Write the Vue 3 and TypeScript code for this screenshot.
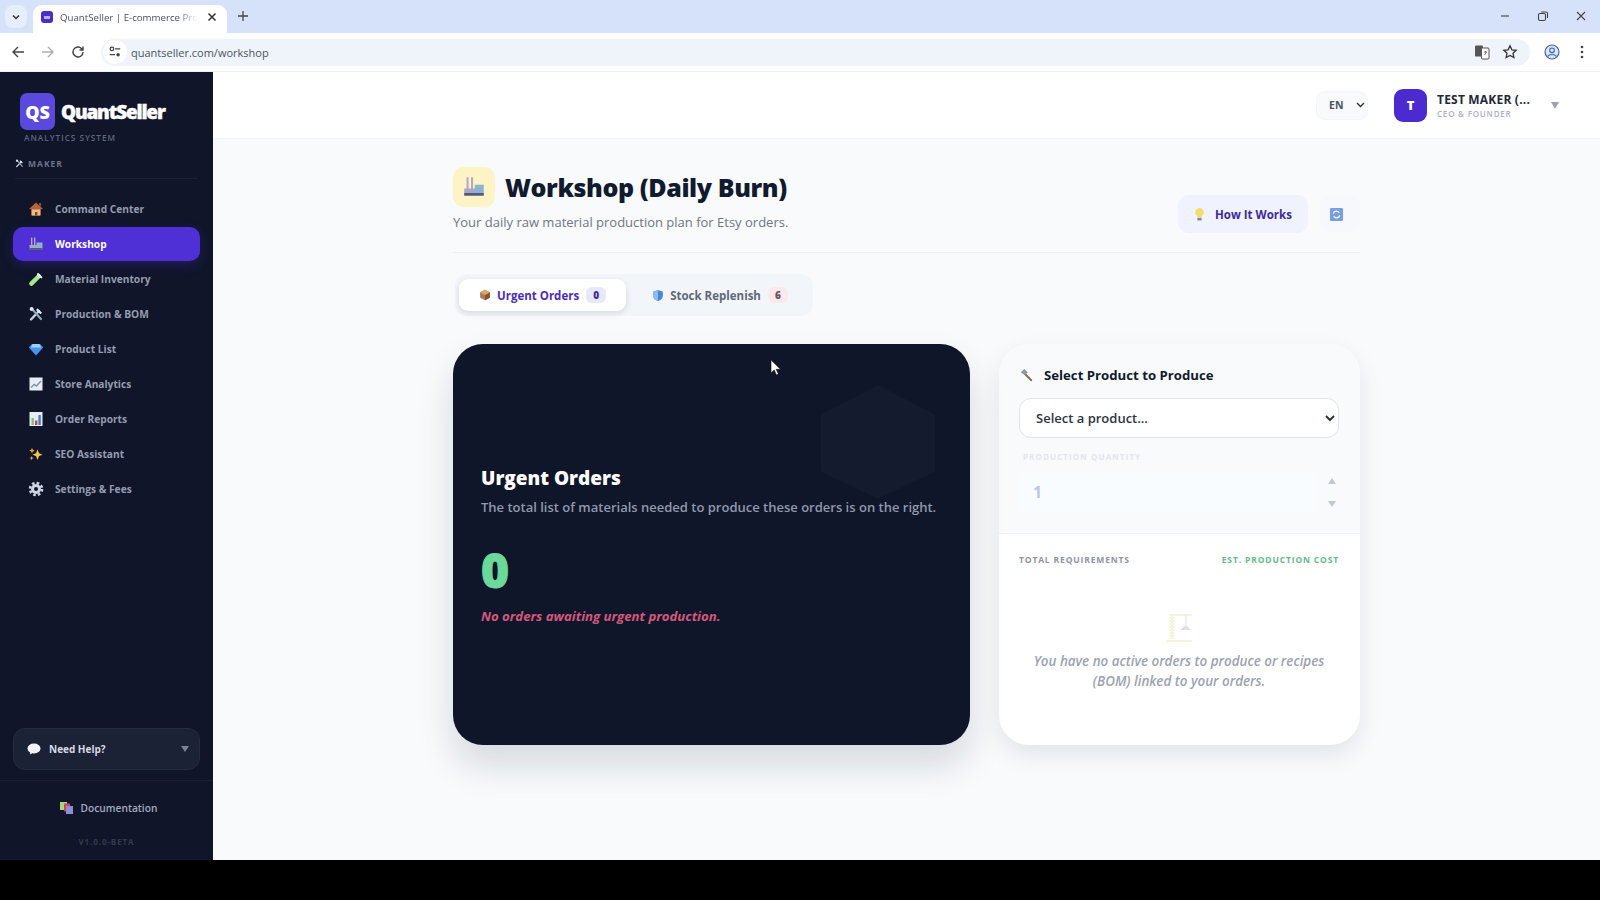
<script setup lang="ts">
import { ref } from 'vue'

// нарисованные вручную иконки вместо эмодзи
const icons: Record<string, string> = {
  house: '<path d="M8 1.5 1 8h2v6.5h10V8h2z" fill="#b9603f"/><path d="M4 8.5h8v6H4z" fill="#e9bd84"/><path d="M7 11h2.4v3.5H7z" fill="#7a4a2c"/><path d="M11 2h2v4l-2-1.8z" fill="#8c4a30"/>',
  factory: '<path d="M3 1.5h1.4v8H3zM6 1.5h1.4v8H6z" fill="#b9a6c9"/><path d="M1.5 9H9v4.5H1.5z" fill="#a7a9c4"/><path d="M8.5 6.5h6v7h-6z" fill="#8fb2d0"/><path d="M1.5 12h13v1.8h-13z" fill="#55587a"/>',
  tube: '<path d="m3.4 12.6 7.4-7.4" stroke="#a8e78b" stroke-width="4.4" stroke-linecap="round"/><path d="m10 3 3.4 3.4" stroke="#f1f5f9" stroke-width="2" stroke-linecap="round"/><path d="m10.2 5.8 1.2-1.2" stroke="#dff5d3" stroke-width="3.4"/>',
  tools: '<path d="m3 13.5 8-8.5" stroke="#cbd5e1" stroke-width="2.4" stroke-linecap="round"/><path d="M9.5 2.2 14 6.8l-1.6 1.4L8 4z" fill="#e2e8f0"/><path d="m4 3 9 10" stroke="#94a3b8" stroke-width="2.2" stroke-linecap="round"/><circle cx="3.6" cy="3" r="2" fill="#e2e8f0"/>',
  gem: '<path d="M4 3h8l3.2 3.6L8 14.5.8 6.6z" fill="#4a94ea"/><path d="M4.6 3h6.8L13 6.6H3z" fill="#9fd0fb"/>',
  chart: '<rect x="1.5" y="1.5" width="13" height="13" fill="#e8ecf4"/><path d="m3 11.5 3.2-3 2.2 1.6L13 5" stroke="#8290b4" stroke-width="1.5" fill="none"/>',
  bars: '<rect x="1.5" y="1" width="13" height="14" fill="#e8ecf4"/><path d="M3.5 7h2.4v7H3.5z" fill="#7cc37a"/><path d="M7 9.5h2.4V14H7z" fill="#c9415f"/><path d="M10.4 4h2.4v10h-2.4z" fill="#4a78c8"/>',
  spark: '<path d="M9.5 3.5 11 7.3l3.6 1.4L11 10l-1.5 4L8 10 4.4 8.7 8 7.3z" fill="#f6c945"/><path d="m4 1.8.8 2 2 .8-2 .8-.8 2-.8-2-2-.8 2-.8z" fill="#f3a33a"/><path d="m3.6 10 .6 1.5 1.5.6-1.5.6-.6 1.5-.6-1.5-1.5-.6 1.5-.6z" fill="#f3a33a"/>',
  gear: '<circle cx="8" cy="8" r="5" fill="#cfd6e2"/><circle cx="8" cy="8" r="6" fill="none" stroke="#cfd6e2" stroke-width="2.6" stroke-dasharray="2.6 2.1"/><circle cx="8" cy="8" r="2" fill="#10162a"/>',
  tune: '<circle cx="4.5" cy="4.5" r="2" fill="none" stroke="#444" stroke-width="1.4"/><path d="M8 4.5h6M2 11h6" stroke="#444" stroke-width="1.4"/><circle cx="11.5" cy="11" r="2" fill="#444"/>',
}

const navItems = [
  { label: 'Command Center', icon: 'house' },
  { label: 'Workshop', icon: 'factory', active: true },
  { label: 'Material Inventory', icon: 'tube' },
  { label: 'Production & BOM', icon: 'tools' },
  { label: 'Product List', icon: 'gem' },
  { label: 'Store Analytics', icon: 'chart' },
  { label: 'Order Reports', icon: 'bars' },
  { label: 'SEO Assistant', icon: 'spark' },
  { label: 'Settings & Fees', icon: 'gear' },
]

const activeTab = ref('urgent')
const product = ref('')
const quantity = ref(1)
</script>

<template>
  <div class="screen">
    <!-- полоса браузера -->
    <div class="tabstrip">
      <div class="tab-menu">
        <svg width="10" height="10" viewBox="0 0 10 10"><path d="m2 3.5 3 3 3-3" stroke="#333" stroke-width="1.5" fill="none"/></svg>
      </div>
      <div class="tab">
        <span class="favicon"><i></i></span>
        <span class="tab-title">QuantSeller | E-commerce Prof</span>
        <svg class="tab-close" width="10" height="10" viewBox="0 0 10 10"><path d="m1.5 1.5 7 7m0-7-7 7" stroke="#333" stroke-width="1.5"/></svg>
      </div>
      <svg class="tab-plus" width="12" height="12" viewBox="0 0 12 12"><path d="M6 1v10M1 6h10" stroke="#444" stroke-width="1.3"/></svg>
      <div class="win-controls">
        <svg width="12" height="12" viewBox="0 0 12 12"><path d="M2 6h8" stroke="#444" stroke-width="1.1"/></svg>
        <svg width="12" height="12" viewBox="0 0 12 12"><rect x="1.5" y="3.5" width="7" height="7" rx="1.5" fill="none" stroke="#444" stroke-width="1.1"/><path d="M4 2h5a1.5 1.5 0 0 1 1.5 1.5V8" fill="none" stroke="#444" stroke-width="1.1"/></svg>
        <svg width="12" height="12" viewBox="0 0 12 12"><path d="m2 2 8 8m0-8-8 8" stroke="#444" stroke-width="1.1"/></svg>
      </div>
    </div>

    <div class="toolbar">
      <svg width="14" height="14" viewBox="0 0 14 14"><path d="M13 7H2m5-5L2 7l5 5" fill="none" stroke="#444" stroke-width="1.4"/></svg>
      <svg width="14" height="14" viewBox="0 0 14 14"><path d="M1 7h11M7 2l5 5-5 5" fill="none" stroke="#a9adb3" stroke-width="1.4"/></svg>
      <svg width="14" height="14" viewBox="0 0 14 14"><path d="M12 7a5 5 0 1 1-1.500-3.600L12 5M12 1.500V5H8.500" fill="none" stroke="#444" stroke-width="1.4"/></svg>
      <div class="omnibox">
        <span class="omni-chip"><svg width="14" height="14" viewBox="0 0 16 16" v-html="icons.tune"></svg></span>
        <span class="url">quantseller.com/workshop</span>
        <svg class="omni-translate" width="16" height="16" viewBox="0 0 16 16"><rect x="1" y="1.5" width="8" height="11" rx="1" fill="#555"/><rect x="7.5" y="4" width="7.5" height="11" rx="1" fill="#fff" stroke="#555"/><path d="M10 8h3m-1.500-1v1m-1 3 2-3" stroke="#555" stroke-width=".8" fill="none"/></svg>
        <svg width="16" height="16" viewBox="0 0 16 16"><path d="m8 1.8 1.900 4 4.300.5-3.200 3 .9 4.300L8 11.400l-3.900 2.200.9-4.300-3.200-3 4.300-.5z" fill="none" stroke="#333" stroke-width="1.3"/></svg>
      </div>
      <svg width="16" height="16" viewBox="0 0 16 16"><circle cx="8" cy="8" r="7" fill="#dbe6fb" stroke="#3d63b0" stroke-width="1.2"/><circle cx="8" cy="6.3" r="2.3" fill="none" stroke="#3d63b0" stroke-width="1.1"/><path d="M3.600 12.500c1.600-2.600 7.200-2.600 8.800 0" fill="none" stroke="#3d63b0" stroke-width="1.1"/></svg>
      <svg class="kebab" width="4" height="14" viewBox="0 0 4 14"><circle cx="2" cy="2" r="1.3" fill="#444"/><circle cx="2" cy="7" r="1.3" fill="#444"/><circle cx="2" cy="12" r="1.3" fill="#444"/></svg>
    </div>

    <div class="app-body">
      <aside class="sidebar">
        <div class="brand">
          <span class="brand-mark">QS</span>
          <span class="brand-name">QuantSeller</span>
        </div>
        <div class="brand-sub">ANALYTICS SYSTEM</div>
        <div class="role">
          <svg width="9" height="9" viewBox="0 0 16 16" v-html="icons.tools"></svg>
          <span>MAKER</span>
        </div>

        <nav class="nav">
          <a v-for="item in navItems" :key="item.label" class="nav-item" :class="{ active: item.active }">
            <svg width="16" height="16" viewBox="0 0 16 16" v-html="icons[item.icon]"></svg>
            <span>{{ item.label }}</span>
          </a>
        </nav>

        <button class="help">
          <svg width="14" height="12" viewBox="0 0 14 12"><ellipse cx="7" cy="5.5" rx="6.5" ry="5" fill="#f1f5f9"/><path d="m3 9 .2 2.600L6 9.800z" fill="#f1f5f9"/></svg>
          <span>Need Help?</span>
          <i class="help-caret"></i>
        </button>

        <div class="side-foot">
          <a class="docs">
            <svg width="15" height="14" viewBox="0 0 15 14"><rect x="1" y="1" width="7" height="8" fill="#a3d977"/><rect x="5" y="2.5" width="6" height="8" fill="#c9485f"/><rect x="7" y="5" width="7" height="8" fill="#8a8fd8"/></svg>
            <span>Documentation</span>
          </a>
          <div class="version">V1.0.0-BETA</div>
        </div>
      </aside>

      <div class="main-col">
        <header class="topbar">
          <div class="lang">
            <span>EN</span>
            <svg width="9" height="6" viewBox="0 0 9 6"><path d="m1 1 3.500 3.500L8 1" fill="none" stroke="#333" stroke-width="1.4"/></svg>
          </div>
          <div class="avatar">T</div>
          <div class="user">
            <div class="user-name">TEST MAKER (...</div>
            <div class="user-role">CEO &amp; FOUNDER</div>
          </div>
          <i class="user-caret"></i>
        </header>

        <main class="page">
          <div class="page-head">
            <div>
              <div class="title-row">
                <span class="title-icon"><svg width="24" height="24" viewBox="0 0 16 16" v-html="icons.factory"></svg></span>
                <h1>Workshop (Daily Burn)</h1>
              </div>
              <p class="subtitle">Your daily raw material production plan for Etsy orders.</p>
            </div>
            <div class="head-actions">
              <button class="how-btn">
                <svg width="11" height="15" viewBox="0 0 12 16"><path d="M6 1a4.600 4.600 0 0 0-2.600 8.400V11h5.200V9.400A4.600 4.600 0 0 0 6 1z" fill="#f3dc6e"/><rect x="3.6" y="11.6" width="4.8" height="3" rx="1" fill="#8b8b8b"/></svg>
                <span>How It Works</span>
              </button>
              <button class="refresh-btn">
                <svg width="15" height="15" viewBox="0 0 16 16"><rect x="1" y="1" width="14" height="14" rx="1.5" fill="#7a9fdc"/><path d="M4.500 7a3.600 3.600 0 0 1 6.400-1M11.500 9a3.600 3.600 0 0 1-6.400 1" fill="none" stroke="#fff" stroke-width="1.3"/></svg>
              </button>
            </div>
          </div>

          <div class="tabs">
            <button class="tab-btn" :class="{ current: activeTab === 'urgent' }" @click="activeTab = 'urgent'">
              <svg width="12" height="12" viewBox="0 0 16 16"><path d="m8 1 6.500 3.400v7.200L8 15l-6.500-3.400V4.400z" fill="#b07a4c"/><path d="M8 8v7l6.500-3.400V4.400z" fill="#7f5534"/><path d="M1.500 4.400 8 8l6.500-3.600L8 1z" fill="#d6a878"/></svg>
              <span>Urgent Orders</span>
              <b class="count count-violet">0</b>
            </button>
            <button class="tab-btn" :class="{ current: activeTab === 'stock' }" @click="activeTab = 'stock'">
              <svg width="12" height="13" viewBox="0 0 16 16"><path d="M8 .8 14.500 3v5.400c0 3.400-2.600 5.800-6.500 7-3.900-1.200-6.500-3.600-6.500-7V3z" fill="#4a86dc"/><path d="M8 .8 1.500 3v5.400c0 3.400 2.600 5.800 6.500 7z" fill="#8fb9ee"/></svg>
              <span>Stock Replenish</span>
              <b class="count count-red">6</b>
            </button>
          </div>

          <section class="panels">
            <div class="hero">
              <svg class="hero-cube" viewBox="0 0 116 116"><path d="M58 0 116 30v58L58 116 0 88V30z" fill="#fff" opacity=".025"/></svg>
              <h2>Urgent Orders</h2>
              <p class="hero-text">The total list of materials needed to produce these orders is on the right.</p>
              <div class="hero-num">0</div>
              <p class="hero-note">No orders awaiting urgent production.</p>
              <svg class="cursor" width="12" height="18" viewBox="0 0 12 18"><path d="M1 1v13l3.200-3 2.200 5 2-.9-2.200-4.800H10.500z" fill="#fff" stroke="#111" stroke-width=".6"/></svg>
            </div>

            <div class="planner">
              <div class="planner-top">
                <div class="planner-title">
                  <svg width="14" height="14" viewBox="0 0 16 16"><path d="m6 6 8 8" stroke="#8b6b52" stroke-width="2.2" stroke-linecap="round"/><path d="m2 5 4-4 4 4-3 3z" fill="#8d96a8"/></svg>
                  <span>Select Product to Produce</span>
                </div>
                <select v-model="product" class="product-select">
                  <option value="">Select a product...</option>
                </select>
                <label class="qty-label">PRODUCTION QUANTITY</label>
                <div class="qty-row">
                  <div class="qty-input">{{ quantity }}</div>
                  <div class="qty-arrows">
                    <i class="arrow-up"></i>
                    <i class="arrow-down"></i>
                  </div>
                </div>
              </div>
              <div class="planner-bottom">
                <div class="req-head">
                  <span>TOTAL REQUIREMENTS</span>
                  <span class="req-cost">EST. PRODUCTION COST</span>
                </div>
                <div class="empty">
                  <svg width="30" height="30" viewBox="0 0 30 30" opacity=".4"><path d="M6 2h22M8 2v24M2 28h26" stroke="#e7e3a8" stroke-width="2"/><path d="M8 4v22" stroke="#e7e3a8" stroke-width="5" stroke-dasharray="2 1"/><path d="M22 2v10" stroke="#b9a9c4"/><path d="m22 12 5 5H16z" fill="#b9a9c4"/></svg>
                  <p>You have no active orders to produce or recipes (BOM) linked to your orders.</p>
                </div>
              </div>
            </div>
          </section>
        </main>
      </div>
    </div>

    <div class="letterbox"></div>
  </div>
</template>

<style>
html, body { margin: 0; background: #000; }
</style>

<style scoped>
.screen {
  height: 900px;
  width: 1600px;
  display: flex;
  flex-direction: column;
  overflow: hidden;
  font-family: "Open Sans", "Noto Sans", sans-serif;
  color: #0f172a;
}
button { font-family: inherit; border: none; cursor: pointer; }

/* браузер */
.tabstrip {
  height: 33px;
  background: #d6e2f9;
  display: flex;
  align-items: flex-end;
  flex: none;
}
.tab-menu {
  width: 22px;
  height: 23px;
  margin: 0 6px 5px 5px;
  border-radius: 8px;
  background: #e6edfb;
  display: flex;
  align-items: center;
  justify-content: center;
}
.tab {
  width: 194px;
  height: 28px;
  box-sizing: border-box;
  padding: 0 10px 4px 8px;
  background: #fff;
  border-radius: 9px 9px 0 0;
  display: flex;
  align-items: center;
  gap: 7px;
}
.favicon {
  width: 12px;
  height: 12px;
  border-radius: 3px;
  background: #4a2fc4;
  display: flex;
  align-items: center;
  justify-content: center;
  flex: none;
}
.favicon i { width: 6px; height: 3px; background: #b9b0ee; }
.tab-title {
  flex: 1;
  min-width: 0;
  font-size: 9.7px;
  color: #4a4f57;
  white-space: nowrap;
  -webkit-mask-image: linear-gradient(90deg, #000 84%, transparent 98%);
  mask-image: linear-gradient(90deg, #000 84%, transparent 98%);
}
.tab-close { flex: none; }
.tab-plus { margin: 0 0 11px 10px; }
.win-controls {
  margin: 0 13px 11px auto;
  display: flex;
  gap: 26px;
}
.toolbar {
  height: 39px;
  background: #fff;
  flex: none;
  display: flex;
  align-items: center;
  gap: 16px;
  padding: 0 16px 0 11px;
  box-sizing: border-box;
  border-bottom: 1px solid #eef0f3;
}
.omnibox {
  flex: 1;
  height: 27px;
  margin-right: -2px;
  background: #eff3fa;
  border-radius: 14px;
  display: flex;
  align-items: center;
  gap: 11px;
  padding: 0 12px 0 2px;
}
.omni-chip {
  width: 24px;
  height: 24px;
  margin-right: -7px;
  border-radius: 50%;
  background: #fff;
  display: flex;
  align-items: center;
  justify-content: center;
}
.url { font-size: 11px; color: #4b5563; flex: 1; }
.omni-translate { margin-right: 1px; }
.kebab { margin-left: 4px; }

.app-body { flex: 1; display: flex; min-height: 0; }
.letterbox { height: 40px; flex: none; background: #000; }

/* боковая панель */
.sidebar {
  width: 213px;
  flex: none;
  box-sizing: border-box;
  background: #10152a;
  display: flex;
  flex-direction: column;
  padding-top: 21px;
  box-shadow: 1px 0 0 #1e2437;
}
.brand { display: flex; align-items: center; gap: 6px; padding-left: 20px; }
.brand-mark {
  width: 35px;
  height: 37px;
  border-radius: 7px;
  background: #5b49dd;
  color: #fff;
  font-weight: 800;
  font-size: 18px;
  display: flex;
  align-items: center;
  justify-content: center;
}
.brand-name {
  color: #fff;
  font-size: 19px;
  font-weight: 800;
  letter-spacing: -1.2px;
  -webkit-text-stroke: .4px #fff;
}
.brand-sub {
  margin: 2px 0 0 24px;
  font-size: 8.2px;
  font-weight: 600;
  letter-spacing: 1px;
  color: #5e6780;
}
.role {
  margin: 15px 15px 0;
  padding-bottom: 9px;
  border-bottom: 1px solid #1b2135;
  display: flex;
  align-items: center;
  gap: 4px;
  font-size: 8.5px;
  font-weight: 700;
  letter-spacing: 1px;
  color: #6c748a;
}
.nav {
  margin-top: 12.5px;
  padding: 0 13px;
  display: flex;
  flex-direction: column;
  gap: 1px;
}
.nav-item {
  height: 34px;
  display: flex;
  align-items: center;
  gap: 11px;
  padding-left: 15px;
  border-radius: 10px;
  font-size: 10.2px;
  font-weight: 700;
  color: #949cb0;
}
.nav-item.active {
  background: #4f2fd6;
  color: #fff;
  box-shadow: 0 4px 12px rgba(79, 47, 214, .28);
}
.help {
  margin: auto 13px 0;
  height: 42px;
  flex: none;
  background: #1c2235;
  border: 1px solid #262c40;
  border-radius: 12px;
  display: flex;
  align-items: center;
  gap: 8px;
  padding: 0 10px 0 13px;
  color: #d5d9e4;
  font-size: 10px;
  font-weight: 700;
}
.help-caret {
  margin-left: auto;
  border: 4px solid transparent;
  border-top: 6px solid #7b8295;
  border-bottom: 0;
}
.side-foot {
  margin-top: 10px;
  border-top: 1px solid #1a2034;
  padding: 20px 0 13px;
  text-align: center;
}
.docs {
  display: flex;
  align-items: center;
  justify-content: center;
  gap: 7px;
  padding-left: 3px;
  font-size: 10.2px;
  font-weight: 600;
  color: #a3abbd;
}
.version {
  margin-top: 21px;
  font-size: 8px;
  font-weight: 700;
  letter-spacing: .9px;
  color: #323950;
}

/* основная область */
.main-col {
  flex: 1;
  min-width: 0;
  background: #f8fafc;
  display: flex;
  flex-direction: column;
}
.topbar {
  height: 67px;
  flex: none;
  box-sizing: border-box;
  background: #fff;
  border-bottom: 1px solid #f1f4f7;
  display: flex;
  align-items: center;
  padding: 0 41px 0 0;
  justify-content: flex-end;
}
.lang {
  width: 52px;
  height: 29px;
  box-sizing: border-box;
  padding: 0 2px 0 12px;
  margin-right: 26px;
  border: 1px solid #f3f5f8;
  border-radius: 9px;
  background: #f9fafc;
  display: flex;
  align-items: center;
  justify-content: space-between;
  font-size: 10.5px;
  font-weight: 700;
  color: #4b5563;
}
.avatar {
  width: 33px;
  height: 33px;
  border-radius: 9px;
  background: #4b2bd0;
  color: #fff;
  font-size: 13px;
  font-weight: 800;
  display: flex;
  align-items: center;
  justify-content: center;
}
.user { margin: 2px 0 0 10px; width: 110px; }
.user-name { font-size: 12px; font-weight: 700; color: #1e293b; line-height: 14px; letter-spacing: .2px; white-space: nowrap; }
.user-role { font-size: 8px; font-weight: 600; letter-spacing: .8px; color: #aab2bf; line-height: 13px; }
.user-caret {
  margin-left: 4px;
  border: 4px solid transparent;
  border-top: 7px solid #9aa3b2;
  border-bottom: 0;
}

.page {
  width: 907px;
  margin: 0 auto;
  padding-top: 28px;
}
.page-head {
  display: flex;
  justify-content: space-between;
  align-items: flex-end;
  padding-bottom: 20px;
  border-bottom: 1px solid #edf0f4;
}
.title-row { display: flex; align-items: center; gap: 10px; }
.title-icon {
  width: 42px;
  height: 40px;
  border-radius: 11px;
  background: #fcf4c4;
  display: flex;
  align-items: center;
  justify-content: center;
}
h1 {
  margin: 0;
  font-size: 25px;
  line-height: 40px;
  font-weight: 800;
  letter-spacing: -.4px;
  color: #111a2e;
}
.subtitle {
  margin: 5px 0 0;
  font-size: 13px;
  line-height: 20px;
  color: #6f7785;
}
.head-actions { display: flex; align-items: center; gap: 12px; margin-bottom: -1px; }
.how-btn {
  width: 130px;
  height: 38px;
  border-radius: 11px;
  background: #f0f3fd;
  display: flex;
  align-items: center;
  justify-content: center;
  gap: 10px;
  color: #3d2a9d;
  font-size: 11.5px;
  font-weight: 700;
}
.refresh-btn {
  width: 40px;
  height: 36px;
  padding: 0 8px 0 0;
  border-radius: 10px;
  background: #f6f8fb;
  display: flex;
  align-items: center;
  justify-content: center;
}
.tabs {
  margin-top: 21px;
  width: 358px;
  height: 42px;
  box-sizing: border-box;
  margin-left: 2px;
  padding: 5px 4px;
  border-radius: 12px;
  background: #f2f5f9;
  display: flex;
  gap: 6px;
}
.tab-btn {
  height: 32px;
  padding: 0 20px;
  display: flex;
  align-items: center;
  gap: 6px;
  border-radius: 9px;
  background: none;
  font-size: 11.5px;
  font-weight: 700;
  color: #5f6878;
}
.tab-btn.current {
  background: #fff;
  color: #4a2db5;
  box-shadow: 0 2px 6px rgba(15, 23, 42, .13);
}
.count {
  width: 20px;
  height: 16px;
  margin-left: 1px;
  border-radius: 6px;
  font-size: 10px;
  line-height: 16px;
  text-align: center;
}
.count-violet { background: #e8e8fb; color: #3e2ca0; }
.count-red { background: #fbe9ec; color: #6b5560; }

.panels {
  margin-top: 28px;
  display: grid;
  grid-template-columns: 517px 361px;
  justify-content: space-between;
  height: 401px;
}
.hero {
  position: relative;
  background: #10162a;
  border-radius: 30px;
  padding: 0 28px;
  display: flex;
  flex-direction: column;
  justify-content: center;
  box-shadow: 0 20px 36px rgba(15, 23, 42, .14);
}
.hero h2 {
  margin: 0;
  font-size: 19px;
  line-height: 26px;
  font-weight: 800;
  color: #fff;
}
.hero-text {
  margin: 7px 0 0;
  font-size: 13px;
  line-height: 18px;
  font-weight: 600;
  color: #8f98ac;
  white-space: nowrap;
}
.hero-num {
  margin-top: 26px;
  font-size: 48px;
  line-height: 56px;
  font-weight: 800;
  color: #6ad99a;
  -webkit-text-stroke: 1px #6ad99a;
}
.hero-note {
  margin: 9px 0 0;
  font-size: 13.2px;
  line-height: 18px;
  font-style: italic;
  font-weight: 700;
  color: #d4587c;
}
.hero-cube {
  position: absolute;
  top: 41px;
  right: 35px;
  width: 114px;
  height: 114px;
}
.cursor {
  position: absolute;
  top: 15px;
  left: 317px;
}
.planner {
  background: #fff;
  border-radius: 30px;
  overflow: hidden;
  display: flex;
  flex-direction: column;
  box-shadow: 0 10px 24px rgba(15, 23, 42, .09);
}
.planner-top {
  background: #f8fafc;
  padding: 22px 21px 13px 20px;
  height: 190px;
  box-sizing: border-box;
  border-bottom: 1px solid #eef1f5;
}
.planner-title {
  display: flex;
  align-items: center;
  gap: 11px;
  font-size: 13.2px;
  line-height: 18px;
  font-weight: 700;
  color: #111a2e;
}
.product-select {
  display: block;
  width: 100%;
  height: 40px;
  margin-top: 14px;
  padding: 0 12px;
  border: 1px solid #dfe4ea;
  border-radius: 12px;
  background: #fff;
  font-family: inherit;
  font-size: 13px;
  font-weight: 600;
  color: #2b3440;
}
.qty-label {
  display: block;
  margin: 13px 0 0 4px;
  font-size: 8px;
  line-height: 12px;
  font-weight: 700;
  letter-spacing: 1.1px;
  color: #e2e6ec;
}
.qty-row { display: flex; align-items: center; margin-top: 8px; }
.qty-input {
  width: 297px;
  height: 41px;
  box-sizing: border-box;
  padding-left: 14px;
  border-radius: 10px;
  background: #f9fcfe;
  font-size: 16px;
  line-height: 43px;
  font-weight: 700;
  color: #bfc4e6;
}
.qty-arrows {
  flex: 1;
  padding: 2px 0 0 8px;
  display: flex;
  flex-direction: column;
  align-items: center;
  gap: 17px;
}
.arrow-up { border: 4px solid transparent; border-bottom: 6px solid #c2c8d1; border-top: 0; }
.arrow-down { border: 4px solid transparent; border-top: 6px solid #c2c8d1; border-bottom: 0; }
.planner-bottom { flex: 1; padding: 20px 21px 0 20px; }
.req-head {
  display: flex;
  justify-content: space-between;
  font-size: 8.5px;
  line-height: 12px;
  font-weight: 700;
  letter-spacing: .85px;
  color: #8d95a3;
}
.req-cost { color: #68b98a; }
.empty {
  margin-top: 47px;
  text-align: center;
}
.empty p {
  margin: 3px auto 0;
  width: 310px;
  font-size: 13.4px;
  line-height: 20px;
  font-style: italic;
  font-weight: 600;
  color: #9ca3af;
}
</style>
